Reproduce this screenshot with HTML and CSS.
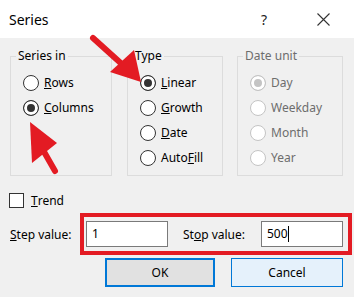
FILE: index.html
```html
<!DOCTYPE html>
<html lang="en">
<head>
  <meta charset="UTF-8">
  <title>Series</title>
  <link rel="stylesheet" href="styles.css">
</head>
<body>

  <div class="dialog">
    <header class="titlebar">
      <span class="title">Series</span>
      <span class="help">?</span>
      <svg class="close" width="13" height="13" viewBox="0 0 13 13">
        <path d="M0.5 0.5 L12.5 12.5 M12.5 0.5 L0.5 12.5" stroke="#333" stroke-width="1.1" fill="none"/>
      </svg>
    </header>

    <div class="groups">
      <fieldset class="group g-series">
        <legend>Series in</legend>
        <div class="options">
          <div class="option"><span class="radio"></span><u>R</u>ows</div>
          <div class="option"><span class="radio checked"></span><u>C</u>olumns</div>
        </div>
      </fieldset>

      <fieldset class="group g-type">
        <legend>Type</legend>
        <div class="options">
          <div class="option"><span class="radio checked"></span><u>L</u>inear</div>
          <div class="option"><span class="radio"></span><u>G</u>rowth</div>
          <div class="option"><span class="radio"></span><u>D</u>ate</div>
          <div class="option"><span class="radio"></span>Auto<u>F</u>ill</div>
        </div>
      </fieldset>

      <fieldset class="group g-unit disabled">
        <legend>Date unit</legend>
        <div class="options">
          <div class="option"><span class="radio checked"></span>Day</div>
          <div class="option"><span class="radio"></span>Weekday</div>
          <div class="option"><span class="radio"></span>Month</div>
          <div class="option"><span class="radio"></span>Year</div>
        </div>
      </fieldset>
    </div>

    <div class="trend">
      <span class="checkbox"></span><u>T</u>rend
    </div>

    <div class="values">
      <span class="step-label"><u>S</u>tep value:</span>
      <div class="highlight">
        <div class="field">1</div>
        <span class="stop-label">St<u>o</u>p value:</span>
        <div class="field stop">500<span class="caret"></span></div>
      </div>
    </div>

    <div class="buttons">
      <button class="btn ok">OK</button>
      <button class="btn cancel">Cancel</button>
    </div>

    <svg class="arrows" width="354" height="297" viewBox="0 0 354 297">
      <line x1="93" y1="38" x2="124" y2="66" stroke="#e31b23" stroke-width="6" stroke-linecap="round"/>
      <polygon points="141,82 110,72 134,50" fill="#e31b23"/>
      <line x1="55" y1="171" x2="43" y2="150" stroke="#e31b23" stroke-width="6" stroke-linecap="round"/>
      <polygon points="30,122 32,163 57,143" fill="#e31b23"/>
    </svg>
  </div>

</body>
</html>
```

FILE: styles.css
```css
body {
  margin: 0;
  font-family: "Noto Sans", "Open Sans", sans-serif;
  font-size: 12px;
  color: #000;
  background: #f0f0f0;
}

.dialog {
  position: relative;
  width: 354px;
  height: 297px;
  overflow: hidden;
}

.titlebar {
  height: 38px;
  background: #fff;
  display: flex;
  align-items: center;
  padding-left: 9px;
}

.title {
  font-size: 14px;
  flex: 1;
}

.help {
  font-size: 14px;
  color: #222;
  width: 8px;
  margin-right: 48px;
}

.close {
  margin-right: 24px;
}

.groups {
  display: flex;
  padding-left: 10px;
  margin-top: 10px;
}

.group {
  box-sizing: border-box;
  height: 128px;
  margin: 0;
  padding: 0;
  border: 1px solid #dcdcdc;
}

.group legend {
  margin-left: 5px;
  padding: 0 2px;
  line-height: 16px;
}

.g-series { width: 102px; margin-right: 15px; }
.g-type { width: 96px; margin-right: 14px; }
.g-unit { width: 106px; }

.options {
  padding: 6px 0 0 12px;
}

.option {
  display: flex;
  align-items: center;
  height: 25px;
}

.radio {
  box-sizing: border-box;
  width: 16px;
  height: 16px;
  border: 1px solid #333;
  border-radius: 50%;
  background: #fff;
  margin-right: 5px;
}

.radio.checked {
  background: #333;
  box-shadow: inset 0 0 0 3px #fff;
}

.disabled {
  color: #6d6d6d;
}

.disabled .radio {
  border-color: #c4c4c4;
}

.disabled .radio.checked {
  background: #c4c4c4;
}

.trend {
  display: flex;
  align-items: center;
  height: 20px;
  margin-top: 14px;
  padding-left: 9px;
}

.checkbox {
  box-sizing: border-box;
  width: 15px;
  height: 15px;
  border: 1px solid #333;
  background: #fff;
  margin-right: 7px;
}

.values {
  display: flex;
  align-items: center;
  margin-top: 3px;
  padding-left: 10px;
}

.step-label {
  width: 70px;
}

.highlight {
  display: flex;
  align-items: center;
  width: 272px;
  box-sizing: border-box;
  border: 4px solid #e31b23;
  padding: 4px 5px 4px 2px;
}

.field {
  box-sizing: border-box;
  width: 82px;
  height: 26px;
  line-height: 24px;
  border: 1px solid #7a7a7a;
  background: #fff;
  padding-left: 5px;
  display: flex;
  align-items: center;
}

.stop-label {
  margin-left: 15px;
}

.field.stop {
  margin-left: auto;
}

.caret {
  display: inline-block;
  width: 1px;
  height: 16px;
  background: #000;
}

.buttons {
  display: flex;
  justify-content: flex-end;
  gap: 16px;
  margin-top: 3px;
  padding-right: 11px;
}

.btn {
  box-sizing: border-box;
  height: 29px;
  font-family: inherit;
  font-size: 12px;
  color: #000;
  padding: 0;
}

.ok {
  width: 110px;
  background: #e1e1e1;
  border: 2px solid #0078d7;
}

.cancel {
  width: 112px;
  background: #e5f1fb;
  border: 1px solid #0078d7;
}

.arrows {
  position: absolute;
  left: 0;
  top: 0;
  pointer-events: none;
}
```
